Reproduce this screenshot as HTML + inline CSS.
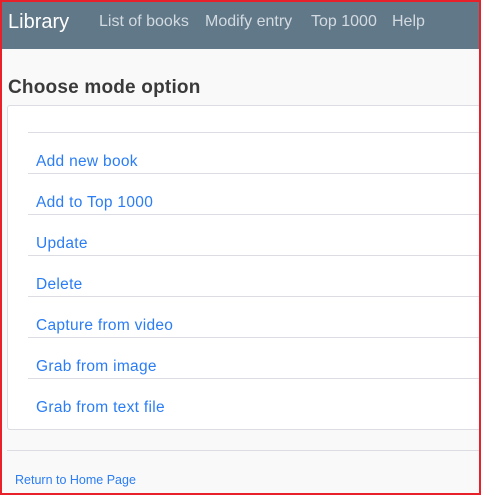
<!DOCTYPE html>
<html><head><style>
*{margin:0;padding:0;box-sizing:border-box}
body{width:481px;height:495px;overflow:hidden;background:#f9f9f9;font-family:"Liberation Sans",sans-serif;position:relative}
.frame{position:absolute;left:0;top:0;width:481px;height:495px;border:2px solid #e8202a;pointer-events:none;z-index:10}
.nav{position:absolute;left:0;top:0;width:481px;height:49px;background:#617889}
.nav span{position:absolute;top:13px;font-size:16px;color:#d3dbe1}
.brand{left:8px;top:11px!important;font-size:20px!important;color:#fff!important}
h2{position:absolute;left:8px;top:77px;font-size:19px;font-weight:bold;color:#3a3a3a;letter-spacing:0.2px}
.card{position:absolute;left:7px;top:105px;width:480px;height:325px;background:#fff;border:1px solid #dcdde2;border-radius:3px}
.ln{position:absolute;left:28px;width:460px;height:1px;background:#dcdde2}
.it{position:absolute;left:36px;font-size:15.5px;letter-spacing:0.3px;color:#2a7df4}
.fl{position:absolute;left:7px;top:450px;width:480px;height:1px;background:#dcdde2}
.ft{position:absolute;left:15px;top:473px;font-size:12.5px;color:#2a7df4}
</style></head><body>
<div class="nav"><span class="brand">Library</span><span style="left:99px">List of books</span><span style="left:205px">Modify entry</span><span style="left:311px">Top 1000</span><span style="left:392px">Help</span></div>
<h2>Choose mode option</h2>
<div class="card"></div>
<div class="ln" style="top:132px"></div>
<div class="it" style="top:153px">Add new book</div>
<div class="ln" style="top:173px"></div>
<div class="it" style="top:194px">Add to Top 1000</div>
<div class="ln" style="top:214px"></div>
<div class="it" style="top:235px">Update</div>
<div class="ln" style="top:255px"></div>
<div class="it" style="top:276px">Delete</div>
<div class="ln" style="top:296px"></div>
<div class="it" style="top:317px">Capture from video</div>
<div class="ln" style="top:337px"></div>
<div class="it" style="top:358px">Grab from image</div>
<div class="ln" style="top:378px"></div>
<div class="it" style="top:399px">Grab from text file</div>
<div class="fl"></div>
<div class="ft">Return to Home Page</div>
<div class="frame"></div>
</body></html>
